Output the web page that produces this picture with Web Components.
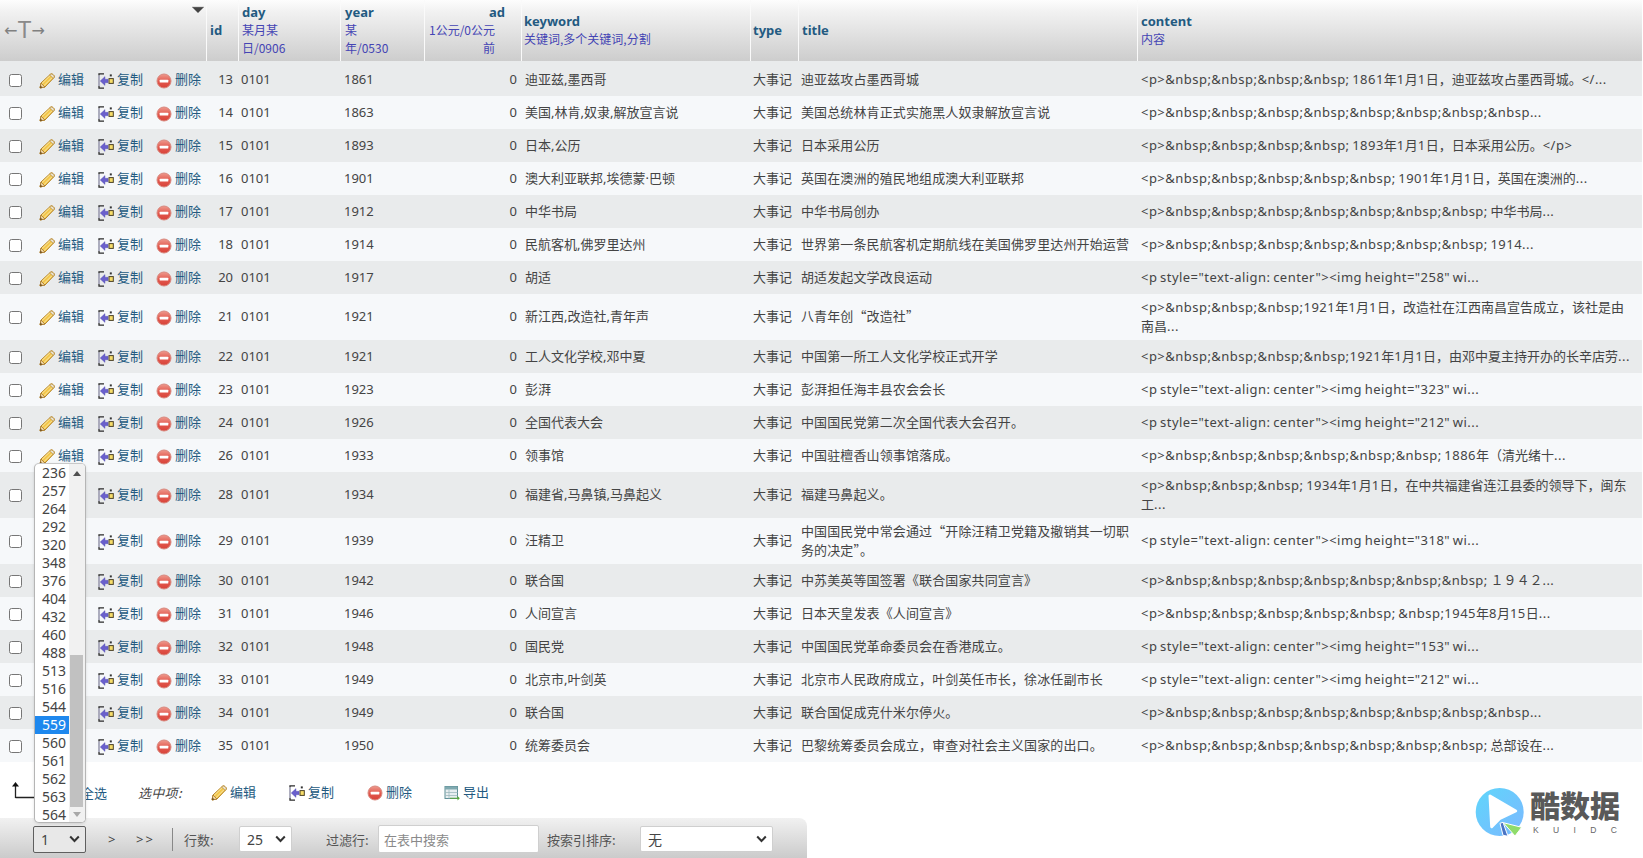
<!DOCTYPE html>
<html lang="zh-CN">
<head>
<meta charset="utf-8">
<title>phpMyAdmin</title>
<style>
html,body{margin:0;padding:0;background:#fff;overflow:hidden}
body{font:13px "Noto Sans","Noto Sans CJK SC",sans-serif;color:#444}
</style>
</head>
<body>
<x-app></x-app>
<script>
const COLS='206px 32px 102px 84px 97px 229px 48px 339px 505px';
const CJK='"Noto Sans CJK SC","Noto Sans",sans-serif';

const ICONS={
 edit:`<svg viewBox="0 0 16 16" width="16" height="16"><path d="M1 15l1-5L11.5 1.2c.8-.6 1.8-.4 2.4.2l1 1c.6.7.6 1.6 0 2.3L6 14z" fill="#f3c64a" stroke="#b5852c" stroke-width="1"/><path d="M3 10.5l8.8-8.6M5 12.6l8.7-8.6" stroke="#fbe9a6" stroke-width="1"/><path d="M1 15l1-5 4 4z" fill="#eed4a0" stroke="#a87a2c" stroke-width=".8"/><path d="M1 15l.5-2.4L3.4 14.500z" fill="#6b4a1c"/><path d="M11.200 1.600c.9-.8 1.900-.6 2.600 0l1 1c.6.700.6 1.500 0 2.200l-.6.6-3.600-3.400z" fill="#e9e2d0" stroke="#b5852c" stroke-width=".7"/></svg>`,
 copy:`<svg viewBox="0 0 16 16" width="16" height="16"><path d="M6 .8H1v1.800M1 13v2.200h5" fill="none" stroke="#2b2b2b" stroke-width="1.300"/><path d="M1 2.600V13" stroke="#9a9ab0" stroke-width="1.600"/><path d="M2.200 8L7 3.600v2.700h3v3.400H7v2.700z" fill="#6a60cc" stroke="#5550b0" stroke-width=".4"/><rect x="11" y="5.600" width="4.300" height="4.800" fill="#f7dd6a" stroke="#4a4026" stroke-width="1"/><rect x="11.800" y="1.400" width="2" height="2" fill="#333"/></svg>`,
 del:`<svg viewBox="0 0 16 16" width="16" height="16"><defs><linearGradient id="r" x1="0" y1="0" x2="0" y2="1"><stop offset="0" stop-color="#ee9a8e"/><stop offset=".55" stop-color="#e2574c"/><stop offset="1" stop-color="#d8433a"/></linearGradient></defs><circle cx="8" cy="8" r="7" fill="url(#r)" stroke="#d8887e" stroke-width="1"/><rect x="3.700" y="6.700" width="8.600" height="2.800" rx=".6" fill="#fff"/></svg>`,
 exp:`<svg viewBox="0 0 16 16" width="16" height="16"><rect x="1" y="1.500" width="12.500" height="12" fill="#e8eef0" stroke="#5f8f96" stroke-width="1"/><rect x="1" y="1.500" width="12.500" height="3" fill="#7fa9b0"/><path d="M1 7.500h12.500M1 10.500h12.500M5 4.500v9" stroke="#9db9be" stroke-width=".8"/><path d="M6 12.700h7.500V11l2.300 2.200-2.300 2.200v-1.600H6z" fill="#5aa83c"/></svg>`
};

class XIcon extends HTMLElement{
 constructor(){super();this.attachShadow({mode:'open'})}
 connectedCallback(){
  this.shadowRoot.innerHTML=`<style>:host{display:inline-flex;width:16px;height:16px;flex:none}svg{display:block}</style>${ICONS[this.getAttribute('name')]}`;
 }
}
customElements.define('x-icon',XIcon);

class XLink extends HTMLElement{
 constructor(){super();this.attachShadow({mode:'open'})}
 connectedCallback(){
  this.shadowRoot.innerHTML=`<style>
   :host{display:inline-flex;align-items:center;gap:3px;color:#235a81;font:13px ${CJK};white-space:nowrap}
   span{margin-bottom:2px}
   x-icon{margin-top:2px}
  </style><x-icon name="${this.getAttribute('icon')}"></x-icon><span><slot></slot></span>`;
 }
}
customElements.define('x-link',XLink);

class XHead extends HTMLElement{
 constructor(){super();this.attachShadow({mode:'open'})}
 connectedCallback(){
  const col=(cls,n,sub='')=>`<div class="c ${cls}"><b>${n}</b>${sub?`<i>${sub}</i>`:''}</div>`;
  this.shadowRoot.innerHTML=`<style>
   :host{display:grid;grid-template-columns:${COLS};height:61px;width:1642px;background:linear-gradient(#fdfdfd,#f2f2f2 18%,#cdcdcd);font:13px "Noto Sans","Noto Sans CJK SC",sans-serif}
   .c{display:flex;flex-direction:column;justify-content:center;align-items:flex-start;padding:0 0 2px 2px;box-sizing:border-box;border-left:1px solid #fafafa;min-width:0}
   .f{border-left:0;padding:0;flex-direction:row;align-items:center;justify-content:flex-start;position:relative}
   b{color:#235a81;font-weight:700;line-height:18px;white-space:nowrap}
   i{font:12px/18px ${CJK};color:#4444b4}
   .narrow i{width:47px}
   .narrow{padding-left:3px}
   .ad{align-items:flex-end;padding:0 26px 2px 0}
   .ad b{margin-right:-10px}
   .ad i{width:70px;text-align:right}
   .id{padding-left:3px}.year{padding-left:4px}.tit{padding-left:3px}.cont{padding-left:3px}
   .ptr{font:23px/1 "Liberation Sans",sans-serif;color:#8a8a8a;padding-left:4px;white-space:nowrap;display:flex;align-items:center}
   .ptr u{font:16px/1 "DejaVu Sans",sans-serif;text-decoration:none;color:#808080}
   svg{position:absolute;right:1px;top:6px}
  </style>
  <div class="c f"><span class="ptr"><u>←</u>T<u>→</u></span><svg width="14" height="8" viewBox="0 0 14 8"><path d="M1 1h12L7 7z" fill="#444" stroke="#999" stroke-width=".5"/></svg></div>
  ${col('id','id')}${col('narrow','day','某月某日/0906')}${col('narrow year','year','某年/0530')}${col('ad','ad','1公元/0公元前')}${col('','keyword','关键词,多个关键词,分割')}${col('','type')}${col('tit','title')}${col('cont','content','内容')}`;
 }
}
customElements.define('x-head',XHead);

class XRow extends HTMLElement{
 constructor(){super();this.attachShadow({mode:'open'})}
 connectedCallback(){
  const d=this.data;
  const esc=s=>s.replace(/&/g,'&amp;').replace(/</g,'&lt;');
  const content=d.c.split(/([\x20-\x7e]+)/).map((p,i)=>i%2?`<span class="l">${esc(p)}</span>`:esc(p)).join('');
  const pad=d.first?'padding-top:2px;':(d.h>33?'padding-bottom:1px;':'');
  this.shadowRoot.innerHTML=`<style>
   :host{display:grid;grid-template-columns:${COLS};width:1642px;height:${d.h}px;box-sizing:border-box;${pad}align-items:center;background:${d.odd?'#e9ebec':'#f6f8fa'};font:13px/19px "Noto Sans","Noto Sans CJK SC",sans-serif;color:#444}
   .a{display:flex;align-items:center;padding-left:9px}
   input{width:13px;height:13px;margin:2px 17px 0 0;flex:none}
   .a x-link:nth-of-type(1){width:59px}.a x-link:nth-of-type(2){width:58px}
   ${d.id>=28?'.a x-link:nth-of-type(1){visibility:hidden}':''}
   .p{padding-left:3px;min-width:0}
   .id{text-align:right;padding:0 5px 0 0}
   .y{padding-left:4px}
   .ad{text-align:right;padding:0 4px 0 0}
   .z{padding-bottom:2px}
   .zc{font-family:${CJK}}
   .t{padding-left:3px;padding-right:1px;letter-spacing:.12px}
   .c4{padding-left:4px}
   .ct{padding-left:4px;padding-right:6px;word-break:break-all}
   .l{letter-spacing:.47px;word-spacing:-1.2px}
  </style>
  <div class="a"><input type="checkbox"><x-link icon="edit">编辑</x-link><x-link icon="copy">复制</x-link><x-link icon="del">删除</x-link></div>
  <div class="id">${d.id}</div><div class="p">0101</div><div class="p y">${d.y}</div><div class="ad">0</div>
  <div class="p c4">${d.k}</div><div class="p z zc">大事记</div><div class="p z zc t">${d.t}</div><div class="p ct">${content}</div>`;
 }
}
customElements.define('x-row',XRow);

class XBulk extends HTMLElement{
 constructor(){super();this.attachShadow({mode:'open'})}
 connectedCallback(){
  this.shadowRoot.innerHTML=`<style>
   :host{display:flex;align-items:center;height:56px;padding:4px 0 0 12px;box-sizing:border-box;font:13px ${CJK};color:#235a81}
   svg{flex:none;margin:0 45px 3px 0;display:block}
   .all{width:57px;flex:none}
   em{color:#444;font-style:italic;width:73px;letter-spacing:.3px;flex:none}
   x-link{flex:none}
   x-link.e{width:78px}x-link.c{width:78px}x-link.d{width:77px}
  </style>
  <svg width="24" height="17" viewBox="0 0 24 17"><path d="M3.500 16V3M3.500 15.500H24" fill="none" stroke="#222" stroke-width="1.300"/><path d="M3.500 0L7 4.500H0z" fill="#111"/></svg>
  <span class="all">全选</span><em>选中项:</em>
  <x-link class="e" icon="edit">编辑</x-link><x-link class="c" icon="copy">复制</x-link><x-link class="d" icon="del">删除</x-link><x-link icon="exp">导出</x-link>`;
 }
}
customElements.define('x-bulk',XBulk);

class XSelect extends HTMLElement{
 constructor(){super();this.attachShadow({mode:'open'})}
 connectedCallback(){
  const focus=this.hasAttribute('focus');
  this.shadowRoot.innerHTML=`<style>
   :host{display:inline-block;position:relative;flex:none;width:${this.getAttribute('w')}px;height:${focus?27:26}px}
   select{appearance:none;-webkit-appearance:none;width:100%;height:100%;box-sizing:border-box;margin:0;padding:0 0 0 7px;border:1px solid ${focus?'#5f5f5f':'#cfcfcf'};border-radius:2px;background:${focus?'#e8e8e8':'#fff'};color:#444;font:14px "Noto Sans","Noto Sans CJK SC",sans-serif;outline:0}
   svg{position:absolute;right:6px;top:9px;pointer-events:none}
  </style><select><option>${this.getAttribute('v')}</option></select>
  <svg width="11" height="8" viewBox="0 0 11 8"><path d="M1.200 1.500L5.500 6l4.300-4.500" fill="none" stroke="#333" stroke-width="2"/></svg>`;
 }
}
customElements.define('x-select',XSelect);

class XNav extends HTMLElement{
 constructor(){super();this.attachShadow({mode:'open'})}
 connectedCallback(){
  this.shadowRoot.innerHTML=`<style>
   :host{display:flex;align-items:center;width:807px;height:40px;box-sizing:border-box;padding:2px 0 0 33px;background:linear-gradient(#f1f1f1,#cbcbcb);border-radius:0 8px 0 0;font:13px ${CJK};color:#555}
   .g{font:13px "Noto Sans",sans-serif;color:#444;flex:none}
   .sep{width:1px;height:23px;background:#888;margin:0 11px 0 17px;flex:none}
   input{width:161px;height:28px;box-sizing:border-box;border:1px solid #cfcfcf;border-radius:2px;background:#fff;padding:0 5px;font:13px ${CJK};margin:0 8px 0 0;flex:none}
   input::placeholder{color:#8a8a8a;opacity:1}
   span{flex:none}
  </style>
  <x-select w="53" v="1" focus></x-select>
  <span class="g" style="margin-left:22px;width:7.500px">&gt;</span>
  <span class="g" style="margin-left:20.500px;letter-spacing:2px;width:19px">&gt;&gt;</span>
  <i class="sep"></i>
  <span style="width:55px">行数:</span><x-select w="53" v="25"></x-select>
  <span style="margin-left:34px;width:52px">过滤行:</span><input placeholder="在表中搜索">
  <span style="width:93px">按索引排序:</span><x-select w="133" v="无"></x-select>`;
 }
}
customElements.define('x-nav',XNav);

class XDrop extends HTMLElement{
 constructor(){super();this.attachShadow({mode:'open'})}
 connectedCallback(){
  const opts=[236,257,264,292,320,348,376,404,432,460,488,513,516,544,559,560,561,562,563,564];
  this.shadowRoot.innerHTML=`<style>
   :host{position:absolute;left:34px;top:463px;width:52px;height:360px;box-sizing:border-box;display:flex;background:#fff;border:1px solid #b5b5b5;border-top-color:#c8c8c8;border-radius:5px;overflow:hidden;font:14px/18px "Noto Sans",sans-serif;color:#444;box-shadow:0 1px 3px rgba(0,0,0,.12)}
   ul{list-style:none;margin:0;padding:0;width:34px;flex:none}
   li{height:18px;padding-left:7px}
   li.s{background:#1e88ee;color:#fff}
   .bar{flex:1;background:#f1f1f1;display:flex;flex-direction:column;align-items:center;position:relative}
   .up{margin-top:7px;width:0;height:0;border:4.5px solid transparent;border-top:0;border-bottom:5px solid #505050}
   .th{position:absolute;left:1px;right:2px;top:191px;height:152px;background:#c1c1c1}
   .dn{position:absolute;top:348px;width:0;height:0;border:4.5px solid transparent;border-bottom:0;border-top:5px solid #a8a8a8}
  </style><ul>${opts.map(o=>`<li${o==559?' class="s"':''}>${o}</li>`).join('')}</ul><div class="bar"><i class="up"></i><i class="th"></i><i class="dn"></i></div>`;
 }
}
customElements.define('x-drop',XDrop);

class XLogo extends HTMLElement{
 constructor(){super();this.attachShadow({mode:'open'})}
 connectedCallback(){
  this.shadowRoot.innerHTML=`<style>
   :host{position:absolute;left:1470px;top:782px;display:flex;align-items:flex-start;color:#595959}
   svg{flex:none;display:block}
   .t{margin-left:0;padding-top:6px}
   .a{font:900 30px/33px ${CJK};letter-spacing:0;white-space:nowrap}
   .b{font:8.500px/12px "Liberation Sans",sans-serif;display:flex;justify-content:space-between;width:84px;margin-left:3px;margin-top:3px;color:#666}
  </style>
  <svg width="60" height="60" viewBox="0 0 60 60"><defs><linearGradient id="b" x1="0" y1="0" x2="1" y2="1"><stop offset="0" stop-color="#5fd6fb"/><stop offset="1" stop-color="#7cb8ff"/></linearGradient></defs>
  <circle cx="29.700" cy="30" r="24" fill="url(#b)"/>
  <path d="M20 14L45.700 29 30 36.300 21.700 44.700z" fill="#fff" stroke="#fff" stroke-width="3" stroke-linejoin="round"/>
  <path d="M30 41.300l3-1 5 14-5-1z" fill="#4a74c4" stroke="#fff" stroke-width="1"/>
  <path d="M33.300 40.700L51.700 45.300 45 54z" fill="#8fdc6a" stroke="#fff" stroke-width="1"/></svg>
  <div class="t"><div class="a">酷数据</div><div class="b"><span>K</span><span>U</span><span>I</span><span>D</span><span>C</span></div></div>`;
 }
}
customElements.define('x-logo',XLogo);

const N=n=>'&nbsp;'.repeat(n);
const P=h=>`<p style="text-align: center"><img height="${h}" wi...`;
const ROWS=[
 [13,1861,'迪亚兹,墨西哥','迪亚兹攻占墨西哥城',`<p>${N(4)} 1861年1月1日，迪亚兹攻占墨西哥城。</...`],
 [14,1863,'美国,林肯,奴隶,解放宣言说','美国总统林肯正式实施黑人奴隶解放宣言说',`<p>${N(7)}&nbsp...`],
 [15,1893,'日本,公历','日本采用公历',`<p>${N(4)} 1893年1月1日，日本采用公历。</p>`],
 [16,1901,'澳大利亚联邦,埃德蒙·巴顿','英国在澳洲的殖民地组成澳大利亚联邦',`<p>${N(5)} 1901年1月1日，英国在澳洲的...`],
 [17,1912,'中华书局','中华书局创办',`<p>${N(7)} 中华书局...`],
 [18,1914,'民航客机,佛罗里达州','世界第一条民航客机定期航线在美国佛罗里达州开始运营',`<p>${N(7)} 1914...`],
 [20,1917,'胡适','胡适发起文学改良运动',P(258)],
 [21,1921,'新江西,改造社,青年声','八青年创“改造社”',`<p>${N(3)}1921年1月1日，改造社在江西南昌宣告成立，该社是由南昌...`,46],
 [22,1921,'工人文化学校,邓中夏','中国第一所工人文化学校正式开学',`<p>${N(4)}1921年1月1日，由邓中夏主持开办的长辛店劳...`],
 [23,1923,'彭湃','彭湃担任海丰县农会会长',P(323)],
 [24,1926,'全国代表大会','中国国民党第二次全国代表大会召开。',P(212)],
 [26,1933,'领事馆','中国驻檀香山领事馆落成。',`<p>${N(6)} 1886年（清光绪十...`],
 [28,1934,'福建省,马鼻镇,马鼻起义','福建马鼻起义。',`<p>${N(3)} 1934年1月1日，在中共福建省连江县委的领导下，闽东工...`,46],
 [29,1939,'汪精卫','中国国民党中常会通过“开除汪精卫党籍及撤销其一切职务的决定”。',P(318),46],
 [30,1942,'联合国','中苏美英等国签署《联合国家共同宣言》',`<p>${N(7)} １９４２...`],
 [31,1946,'人间宣言','日本天皇发表《人间宣言》',`<p>${N(5)} &nbsp;1945年8月15日...`],
 [32,1948,'国民党','中国国民党革命委员会在香港成立。',P(153)],
 [33,1949,'北京市,叶剑英','北京市人民政府成立，叶剑英任市长，徐冰任副市长',P(212)],
 [34,1949,'联合国','联合国促成克什米尔停火。',`<p>${N(7)}&nbsp...`],
 [35,1950,'统筹委员会','巴黎统筹委员会成立，审查对社会主义国家的出口。',`<p>${N(7)} 总部设在...`]
];

class XApp extends HTMLElement{
 constructor(){super();this.attachShadow({mode:'open'})}
 connectedCallback(){
  this.shadowRoot.innerHTML=`<style>:host{display:block;position:relative;width:1643px;height:858px;overflow:hidden;background:#fff}</style><x-head></x-head><div id="rows"></div><x-bulk></x-bulk><x-nav></x-nav><x-drop></x-drop><x-logo></x-logo>`;
  const box=this.shadowRoot.getElementById('rows');
  ROWS.forEach((r,i)=>{
   const e=document.createElement('x-row');
   e.data={id:r[0],y:r[1],k:r[2],t:r[3],c:r[4],h:r[5]||(i==0?35:33),odd:i%2==0,first:i==0};
   box.appendChild(e);
  });
 }
}
customElements.define('x-app',XApp);
</script>
</body>
</html>
